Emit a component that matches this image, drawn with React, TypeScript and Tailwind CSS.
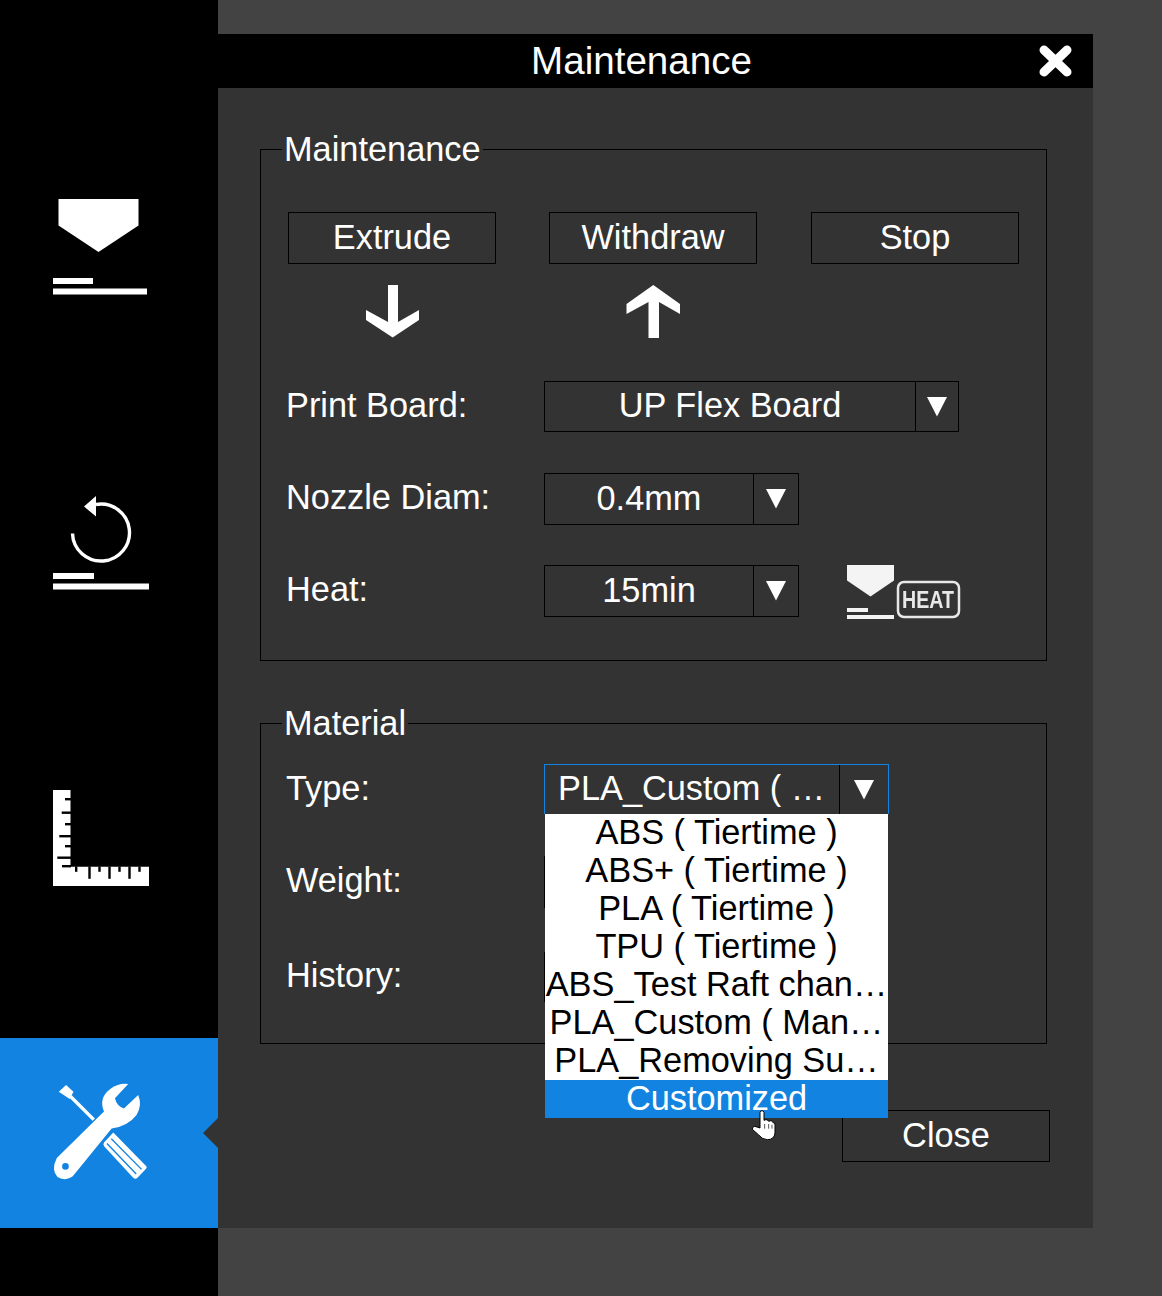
const FONT = "font-['Liberation_Sans',Arial,sans-serif]";

const MATERIALS = [
  "ABS ( Tiertime )",
  "ABS+ ( Tiertime )",
  "PLA ( Tiertime )",
  "TPU ( Tiertime )",
  "ABS_Test Raft chan…",
  "PLA_Custom ( Man…",
  "PLA_Removing Su…",
];

function Caret() {
  return (
    <svg width="20" height="20" viewBox="0 0 20 20" className="blur-[0.5px]">
      <path d="M0 0H20L10 19.5Z" fill="#fff" />
    </svg>
  );
}

function Dropdown({
  value,
  width,
  height,
  arrow,
  focused,
  align = "center",
}: {
  value: string;
  width: string;
  height: string;
  arrow: string;
  focused?: boolean;
  align?: "center" | "left";
}) {
  return (
    <div
      className={`flex border ${focused ? "border-[#1283e0] border-b-0" : "border-black"} ${width} ${height}`}
    >
      <div
        className={`flex min-w-0 flex-1 items-center whitespace-nowrap ${align === "left" ? "justify-start pb-[2px] pl-[13px]" : "justify-center pb-[1px]"}`}
      >
        {value}
      </div>
      <div className={`flex items-center justify-center border-l border-black ${arrow}`}>
        <Caret />
      </div>
    </div>
  );
}

function PlainButton({ label, className = "" }: { label: string; className?: string }) {
  return (
    <button
      type="button"
      className={`flex h-[52px] w-[208px] items-center justify-center border border-black pb-[1px] text-white ${className}`}
    >
      {label}
    </button>
  );
}

function FormRow({
  label,
  className = "",
  children,
}: {
  label: string;
  className?: string;
  children?: React.ReactNode;
}) {
  return (
    <div className={`flex items-start ${className}`}>
      <div className="w-[283px] pl-[25px] pt-[1px] leading-[46px]">{label}</div>
      {children}
    </div>
  );
}

function NozzleIcon() {
  return (
    <svg width="96" height="96" viewBox="0 0 96 96" fill="#fff">
      <path d="M5.5 0H85.5V26.5L45.5 53L5.5 26.5Z" />
      <rect x="0" y="79" width="40" height="6" />
      <rect x="0" y="89.5" width="94" height="6" />
    </svg>
  );
}

function ResetIcon() {
  return (
    <svg width="96" height="94" viewBox="0 0 96 94" fill="none">
      <path
        d="M19.5 37.5A28.5 28.5 0 1 0 43 8.5"
        stroke="#fff"
        strokeWidth="3.4"
      />
      <path d="M31 10.5L43 0V20.5Z" fill="#fff" />
      <rect x="0" y="77" width="41" height="6" fill="#fff" />
      <rect x="0" y="87.5" width="96" height="6" fill="#fff" />
    </svg>
  );
}

function RulerIcon() {
  const side = [
    [8, 12],
    [21.5, 8.7],
    [33, 12],
    [45, 6.3],
    [55, 12],
    [66.5, 4.3],
    [75, 9],
  ];
  const bottom = [
    [22, 5.3],
    [35.3, 12.3],
    [45.3, 5.3],
    [55.3, 12.3],
    [65.3, 5.3],
    [75.3, 12.3],
    [85.3, 5.3],
  ];
  return (
    <svg width="96" height="96" viewBox="0 0 96 96" className="blur-[0.3px]">
      <path d="M0 0H17.5V76.7H96V96H0Z" fill="#fff" />
      {side.map(([y, x]) => (
        <rect key={y} x={x} y={y} width={18 - x} height="2.4" fill="#000" />
      ))}
      {bottom.map(([x, h]) => (
        <rect key={x} x={x} y="76.5" width="2.4" height={h} fill="#000" />
      ))}
    </svg>
  );
}

function ToolsIcon() {
  return (
    <svg width="100" height="103" viewBox="150 930 300 310">
      {/* screwdriver */}
      <path d="M176 965L198 945L220 965L209 987Z" fill="#fff" />
      <path d="M204 972L318 1086" stroke="#fff" strokeWidth="10" />
      <path
        d="M340 1088L440 1190Q442 1194 438 1198L412 1225Q406 1230 400 1224L313 1130Q308 1124 312 1118Z"
        fill="#fff"
      />
      <path d="M334 1107L425 1199M321 1121L409 1213" stroke="#1283e0" strokeWidth="4" />
      {/* wrench, blue halo keeps it apart from the shaft */}
      <path
        d="M385 942L345 985Q350 1008 372 1016L415 975Q428 1005 410 1035Q385 1068 335 1076L218 1220Q198 1236 172 1222Q152 1200 170 1165L312 1025Q295 985 330 958Q355 938 385 942Z"
        fill="#fff"
        stroke="#1283e0"
        strokeWidth="8"
        paintOrder="stroke"
      />
      <circle cx="196" cy="1190" r="10" fill="#1283e0" />
    </svg>
  );
}

function HeatIcon() {
  return (
    <div className="flex items-start blur-[0.3px]">
      <svg width="47" height="54" viewBox="0 0 47 54" fill="#f4f4f4">
        <path d="M0 0H47V15.5L23.5 31.5L0 15.5Z" />
        <rect x="0" y="43" width="21" height="4" />
        <rect x="0" y="50" width="47" height="4" />
      </svg>
      <svg width="66" height="40" viewBox="0 0 66 40" className="ml-[2px] mt-[15px]">
        <rect x="2" y="2" width="61" height="35" rx="6" fill="none" stroke="#e8e8e8" strokeWidth="2.5" />
        <text
          x="6"
          y="28"
          fill="#e8e8e8"
          fontSize="23"
          fontWeight="700"
          textLength="52"
          lengthAdjust="spacingAndGlyphs"
        >
          HEAT
        </text>
      </svg>
    </div>
  );
}

function HandCursor() {
  return (
    <svg
      width="27"
      height="33"
      viewBox="660 1060 81 99"
      className="absolute left-[206px] top-[344px] z-20"
    >
      <path
        d="M690 1120V1073Q696 1062 702 1073V1097Q712 1092 716 1100Q726 1095 729 1104Q736 1102 735 1112V1135Q733 1155 712 1155Q697 1155 685 1140L667 1124Q668 1113 678 1116Z"
        fill="#fff"
        stroke="#000"
        strokeWidth="3"
      />
      <path d="M704 1108V1122M716 1108V1122M726 1110V1122" stroke="#000" strokeWidth="2" />
    </svg>
  );
}

export default function App() {
  return (
    <div className={`flex h-[1296px] w-full bg-[#434343] text-[34.35px] text-white ${FONT}`}>
      {/* left rail */}
      <aside className="flex w-[218px] shrink-0 flex-col bg-black">
        <div className="ml-[53px] mt-[199px]">
          <NozzleIcon />
        </div>
        <div className="ml-[53px] mt-[201px]">
          <ResetIcon />
        </div>
        <div className="ml-[53px] mt-[200px]">
          <RulerIcon />
        </div>
        <div className="relative mt-[152px] h-[190px] bg-[#1283e0] pl-[50px] pt-[42px]">
          <ToolsIcon />
          <svg width="15" height="30" viewBox="0 0 15 30" className="absolute right-0 top-[80px]">
            <path d="M15 0V30L0 15Z" fill="#333" />
          </svg>
        </div>
      </aside>

      {/* dialog */}
      <div className="pt-[34px]">
        <div className="h-[1194px] w-[875px] bg-[#333333]">
          <header className="flex h-[54px] items-center bg-black">
            <span className="flex-1 pb-[1px] pl-[26px] text-center text-[38.6px]">Maintenance</span>
            <svg width="33" height="32" viewBox="0 0 33 32" className="mr-[21px] blur-[0.3px]">
              <path
                d="M5 5L28 27M28 5L5 27"
                stroke="#fff"
                strokeWidth="9"
                strokeLinecap="round"
              />
            </svg>
          </header>

          <div className="pl-[42px] pt-[42px]">
            <fieldset className="w-[787px] border border-black pb-[40px]">
              <legend className="ml-[21px] px-[2px] leading-[39px]">Maintenance</legend>
              <div className="mt-[43px] flex gap-[53px] pl-[27px]">
                <PlainButton label="Extrude" />
                <PlainButton label="Withdraw" />
                <PlainButton label="Stop" className="ml-px" />
              </div>
              <div className="mt-[21px] flex gap-[53px] pl-[27px]">
                <div className="flex w-[208px] justify-center">
                  <svg width="54" height="53" viewBox="0 0 54 53" fill="#fff" className="blur-[0.4px]">
                    <path d="M23 0H33V37L54 25V35L27.7 52.5L1 35V25L23 37Z" />
                  </svg>
                </div>
                <div className="flex w-[208px] justify-center">
                  <svg width="54" height="53" viewBox="0 0 54 53" fill="#fff" className="blur-[0.4px]">
                    <path d="M27.3 0L54 19V29L33 17V53H22.5V17L0.5 29V19Z" />
                  </svg>
                </div>
              </div>
              <FormRow label="Print Board:" className="mt-[43px]">
                <Dropdown value="UP Flex Board" width="w-[415px]" height="h-[51px]" arrow="w-[43px]" />
              </FormRow>
              <FormRow label="Nozzle Diam:" className="mt-[41px]">
                <Dropdown value="0.4mm" width="w-[255px]" height="h-[52px]" arrow="w-[45px]" />
              </FormRow>
              <FormRow label="Heat:" className="mt-[40px]">
                <Dropdown value="15min" width="w-[255px]" height="h-[52px]" arrow="w-[45px]" />
                <div className="ml-[48px]">
                  <HeatIcon />
                </div>
              </FormRow>
            </fieldset>

            <fieldset className="mt-[43px] w-[787px] border border-black pb-[41px]">
              <legend className="ml-[21px] px-[2px] leading-[39px]">Material</legend>
              <FormRow label="Type:" className="mt-[21px]">
                <div className="relative">
                  <Dropdown
                    value="PLA_Custom ( …"
                    width="w-[345px]"
                    height="h-[50px]"
                    arrow="w-[49px]"
                    align="left"
                    focused
                  />
                  {/* open list lies over Weight and History */}
                  <ul className="absolute left-px top-full z-10 w-[343px] bg-white text-center text-black">
                    {MATERIALS.map((m) => (
                      <li key={m} className="h-[38px] whitespace-nowrap leading-[36px]">
                        {m}
                      </li>
                    ))}
                    <li className="h-[38px] bg-[#1283e0] leading-[36px] text-white">Customized</li>
                  </ul>
                  <HandCursor />
                </div>
              </FormRow>
              <FormRow label="Weight:" className="mt-[42px]">
                <div className="h-[52px] w-[344px] border border-black" />
              </FormRow>
              <FormRow label="History:" className="mt-[43px]">
                <div className="mt-px h-[50px] w-[344px] border border-black" />
              </FormRow>
            </fieldset>
          </div>

          <div className="mt-[66px] flex justify-end pr-[43px]">
            <PlainButton label="Close" />
          </div>
        </div>
      </div>
    </div>
  );
}
